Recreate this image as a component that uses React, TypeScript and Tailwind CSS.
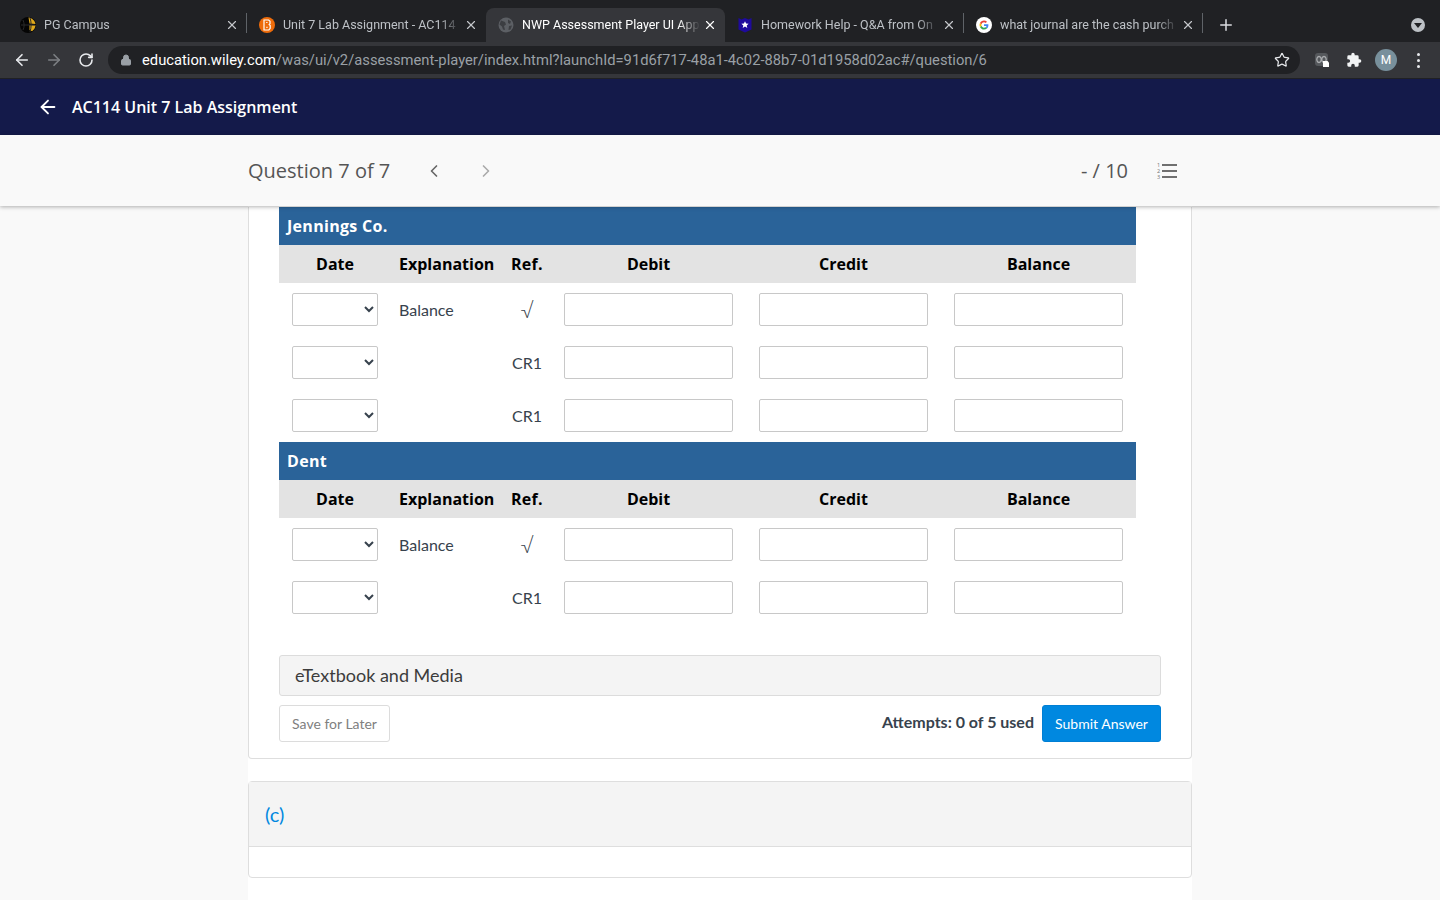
import { ArrowLeft, ArrowRight, ChevronLeft, ChevronRight, Lock, Plus, RotateCw, Star, X } from 'lucide-react';
import type { ReactNode } from 'react';

function PgIcon() {
  return (
    <svg viewBox="0 0 16 16" className="h-4 w-4">
      <circle cx="8" cy="8" r="8" fill="#050505" />
      <path d="M8.500 .5C12 1 15 3.500 15.500 7L9.500 6.500zM9.500 8l6 .3c-.2 2.500-1.400 4.700-3.500 6L9.500 13z" fill="#e0a91c" />
      <path d="M3 3c1.500 3.500 1.500 7 0 10M1 8h14M10 1c1.500 4 1.500 9 0 14" stroke="#2a2a2a" strokeWidth="1" fill="none" />
    </svg>
  );
}

function BrightspaceIcon() {
  return (
    <svg viewBox="0 0 16 16" className="h-4 w-4">
      <circle cx="8" cy="8" r="8" fill="#ee6c0b" />
      <path d="M5 3h4.700l1.300 1.300v2.400l-.8.8 1 1v2.900L9.900 13H5z" fill="none" stroke="#fff" strokeWidth="1.200" />
      <path d="M7.200 5.500h1.300M7.200 10.300h1.500" stroke="#fff" strokeWidth="1" />
    </svg>
  );
}

function GlobeIcon() {
  return (
    <svg viewBox="0 0 16 16" className="h-4 w-4">
      <circle cx="8" cy="8" r="7.500" fill="#5c5f64" />
      <path d="M3 3.500l4 1.500 1 2.500-2 1.500 1 4-2-.5-1-3-2.500-2zM10 2.500l3 2-1 2.500-2-1zM11 9l3-.5-1.500 4-2 .5z" fill="#3c3e42" />
    </svg>
  );
}

function ShieldIcon() {
  return (
    <svg viewBox="0 0 16 16" className="h-4 w-4">
      <path d="M1.500 1l3 1.500L8 1l3.500 1.500 3-1.500v11.500L8 15.500l-6.500-3z" fill="#1e0a9c" />
      <path d="M8 4.200l1.100 2.400 2.500.2-1.900 1.600.6 2.500L8 9.600l-2.300 1.300.6-2.500-1.900-1.600 2.500-.2z" fill="#fff" />
    </svg>
  );
}

function GoogleIcon() {
  return (
    <svg viewBox="0 0 16 16" className="h-4 w-4">
      <circle cx="8" cy="8" r="8" fill="#fff" />
      <path d="M12.400 8.200c0-.3 0-.6-.1-.9H8v1.700h2.500c-.1.600-.4 1.100-.9 1.400l1.400 1.100c.8-.8 1.400-1.900 1.400-3.300z" fill="#4285f4" />
      <path d="M8 12.500c1.200 0 2.200-.4 3-1.100l-1.400-1.100c-.4.300-1 .4-1.600.4-1.200 0-2.200-.8-2.500-1.900L4 9.900c.7 1.500 2.200 2.600 4 2.600z" fill="#34a853" />
      <path d="M5.500 8.800c-.2-.5-.2-1.100 0-1.600L4 6.100c-.6 1.200-.6 2.600 0 3.800z" fill="#fbbc05" />
      <path d="M8 5.300c.7 0 1.300.2 1.700.7L11 4.700c-.8-.8-1.900-1.200-3-1.200-1.800 0-3.300 1-4 2.600l1.500 1.100C5.800 6.100 6.800 5.300 8 5.300z" fill="#ea4335" />
    </svg>
  );
}

const tabs: { title: string; icon: ReactNode; active?: boolean; sep?: boolean }[] = [
  { title: 'PG Campus', icon: <PgIcon />, sep: true },
  { title: 'Unit 7 Lab Assignment - AC114', icon: <BrightspaceIcon /> },
  { title: 'NWP Assessment Player UI App', icon: <GlobeIcon />, active: true },
  { title: 'Homework Help - Q&A from On', icon: <ShieldIcon />, sep: true },
  { title: 'what journal are the cash purch', icon: <GoogleIcon />, sep: true },
];

function Tab({ title, icon, active, sep }: { title: string; icon: ReactNode; active?: boolean; sep?: boolean }) {
  return (
    <div className={`relative flex h-[34px] w-[239px] items-center pl-3 pr-2 ${active ? 'rounded-t-lg bg-[#35363a] text-white' : 'text-[#bdc1c6]'} ${sep ? "after:absolute after:top-[5px] after:right-0 after:h-5 after:w-px after:bg-[#5f6368] after:content-['']" : ''}`}>
      <div className="shrink-0">{icon}</div>
      <div className="ml-2 w-[178px] whitespace-nowrap text-[12.500px] [mask-image:linear-gradient(to_right,black_88%,transparent)]">
        {title}
      </div>
      <X className={`ml-auto h-[14px] w-[14px] shrink-0 ${active ? 'text-white' : 'text-[#c4c7cb]'}`} strokeWidth={2} />
    </div>
  );
}

function ChromeBar() {
  return (
    <div className="font-['Roboto',sans-serif]">
      <div className="flex h-[42px] items-end bg-[#202124] pl-2">
        {tabs.map((t) => (
          <Tab key={t.title} {...t} />
        ))}
        <div className="flex h-[34px] items-center pl-[14px]">
          <Plus className="h-[18px] w-[18px] text-[#dadce0]" strokeWidth={2} />
        </div>
        <div className="ml-auto flex h-[34px] items-center pr-[15px]">
          <div className="flex h-[14px] w-[14px] items-center justify-center rounded-full bg-[#bdc1c6]">
            <div className="h-0 w-0 border-x-[4px] border-t-[5px] border-x-transparent border-t-[#202124]" />
          </div>
        </div>
      </div>
      <div className="flex h-[37px] items-center border-b border-[#202124] bg-[#35363a]">
        <ArrowLeft className="ml-[13px] h-[18px] w-[18px] text-[#e8eaed]" strokeWidth={2.2} />
        <ArrowRight className="ml-[14px] h-[18px] w-[18px] text-[#7d8084]" strokeWidth={2.2} />
        <RotateCw className="ml-[15px] h-4 w-4 text-[#e8eaed]" strokeWidth={2.4} />
        <div className="ml-[14px] flex h-7 w-[1192px] items-center rounded-full bg-[#202124] pl-3 pr-[10px]">
          <Lock className="h-3 w-3 text-[#9aa0a6]" fill="#9aa0a6" />
          <div className="ml-[10px] whitespace-nowrap text-[14.750px] text-[#9aa0a6]">
            <span className="text-white">education.wiley.com</span>/was/ui/v2/assessment-player/index.html?launchId=91d6f717-48a1-4c02-88b7-01d1958d02ac#/question/6
          </div>
          <Star className="ml-auto h-4 w-4 text-[#e8eaed]" strokeWidth={1.8} />
        </div>
        <svg viewBox="0 0 16 16" className="ml-[14px] h-4 w-4">
          <rect x="1" y="1" width="13" height="13" rx="3" fill="#55585c" />
          <path d="M5 4.500a2.200 3 0 1 0 .01 0zM10 4.500a2.200 3 0 1 0 .01 0z" fill="none" stroke="#a9abae" strokeWidth="1.300" />
          <path d="M9 9h4.500l1.500 1.500V15H9z" fill="#fff" />
        </svg>
        <svg viewBox="0 0 24 24" className="ml-4 h-4 w-4" fill="#f1f3f4">
          <path d="M20.500 11H19V7a2 2 0 0 0-2-2h-4V3.500a2.500 2.500 0 0 0-5 0V5H4a2 2 0 0 0-2 2v3.800h1.500a2.700 2.700 0 0 1 0 5.400H2V20a2 2 0 0 0 2 2h3.800v-1.500a2.700 2.700 0 0 1 5.400 0V22H17a2 2 0 0 0 2-2v-4h1.500a2.500 2.500 0 0 0 0-5z" />
        </svg>
        <div className="ml-[13px] flex h-[22px] w-[22px] items-center justify-center rounded-full bg-[#78909c] text-[12px] text-white">M</div>
        <div className="ml-[20px] flex flex-col gap-[3px]">
          <div className="h-[3px] w-[3px] rounded-full bg-[#e8eaed]" />
          <div className="h-[3px] w-[3px] rounded-full bg-[#e8eaed]" />
          <div className="h-[3px] w-[3px] rounded-full bg-[#e8eaed]" />
        </div>
      </div>
    </div>
  );
}

const grid = 'grid grid-cols-[112px_112px_48px_195px_195px_195px]';

function Row({ explanation, ref_ }: { explanation?: string; ref_: string }) {
  return (
    <div className={`${grid} h-[53px] items-center font-['Lato',sans-serif] text-[16px] text-[#37424d]`}>
      <div className="flex justify-center">
        <select className="h-[33px] w-[86px] rounded-[2px] border border-[#c8c8c8] bg-white" />
      </div>
      <div className="pl-2">{explanation}</div>
      <div className={`text-center ${ref_ === '√' ? 'text-[21px] leading-none font-light' : ''}`}>{ref_}</div>
      {[0, 1, 2].map((i) => (
        <div key={i} className="flex justify-center">
          <input className="h-[33px] w-[169px] rounded-[2px] border border-[#c8c8c8] bg-white" />
        </div>
      ))}
    </div>
  );
}

function Section({ name, rows }: { name: string; rows: string[] }) {
  return (
    <div>
      <div className="flex h-[38px] items-center bg-[#2a6399] pl-2 font-['Open_Sans',sans-serif] text-[16px] font-bold tracking-[0.3px] text-white">{name}</div>
      <div className={`${grid} h-[38px] items-center bg-[#e3e3e3] font-['Open_Sans',sans-serif] text-[16px] font-bold text-black`}>
        <div className="text-center">Date</div>
        <div className="whitespace-nowrap pl-2">Explanation</div>
        <div className="whitespace-nowrap text-center tracking-[0.3px]">Ref.</div>
        <div className="text-center">Debit</div>
        <div className="text-center">Credit</div>
        <div className="text-center">Balance</div>
      </div>
      {rows.map((r, i) => (
        <Row key={i} ref_={r} explanation={r === '√' ? 'Balance' : undefined} />
      ))}
    </div>
  );
}

export default function App() {
  return (
    <div className="flex h-[900px] flex-col overflow-hidden bg-[#f9f9f9]">
      <ChromeBar />
      <div className="flex h-[56px] items-center bg-[#141a4a] pl-[37px] font-['Open_Sans',sans-serif] text-white">
        <ArrowLeft className="h-[22px] w-[22px]" strokeWidth={2} />
        <div className="ml-[13px] text-[16px] font-semibold">AC114 Unit 7 Lab Assignment</div>
      </div>
      <div className="relative z-10 flex h-[71px] items-center bg-[#f9f9f9] pl-[248px] pr-[263px] font-['Open_Sans',sans-serif] text-[20px] text-[#555] shadow-[0_1px_4px_rgba(0,0,0,0.3)]">
        <span>Question 7 of 7</span>
        <ChevronLeft className="ml-[34px] h-5 w-5 text-[#666]" strokeWidth={2} />
        <ChevronRight className="ml-[32px] h-5 w-5 text-[#aaa]" strokeWidth={2} />
        <span className="ml-auto">- / 10</span>
        <svg viewBox="0 0 20 18" className="ml-[29px] h-[18px] w-5">
          <path d="M5 3h15M5 9h15M5 15h15" stroke="#707070" strokeWidth="2" />
          <text x="0" y="5" fontSize="5.500" fill="#707070" fontFamily="Open Sans">1</text>
          <text x="0" y="11" fontSize="5.500" fill="#707070" fontFamily="Open Sans">2</text>
          <text x="0" y="17" fontSize="5.500" fill="#707070" fontFamily="Open Sans">3</text>
        </svg>
      </div>
      <div className="mx-auto w-[944px] flex-1 bg-white pt-px">
        <div className="rounded-b border border-t-0 border-[#dedede] pl-[30px] pr-[30px] pb-4">
          <div className="w-[857px]">
            <Section name="Jennings Co." rows={['√', 'CR1', 'CR1']} />
            <Section name="Dent" rows={['√', 'CR1']} />
          </div>
          <div className="mt-[31px] flex h-[41px] items-center rounded-[3px] border border-[#dcdcdc] bg-[#f4f4f4] pl-[15px] font-['Lato',sans-serif] text-[18px] text-[#3c3c3c]">
            eTextbook and Media
          </div>
          <div className="mt-[9px] flex items-center font-['Lato',sans-serif]">
            <div className="flex h-[37px] w-[111px] items-center justify-center rounded-[3px] border border-[#dcdcdc] text-[14px] text-[#808080]">Save for Later</div>
            <div className="ml-auto mb-1 text-[16px] font-bold text-[#37424d]">Attempts: 0 of 5 used</div>
            <div className="ml-2 flex h-[37px] w-[119px] items-center justify-center rounded-[3px] border border-[#007fd4] bg-[#0088e0] text-[14px] text-white">Submit Answer</div>
          </div>
        </div>
        <div className="mt-[22px] rounded border border-[#dedede]">
          <div className="flex h-[65px] items-center border-b border-[#dedede] bg-[#f4f4f4] pl-4 font-['Lato',sans-serif] text-[20px] text-[#0088e0]">(c)</div>
          <div className="h-[30px]" />
        </div>
      </div>
    </div>
  );
}
